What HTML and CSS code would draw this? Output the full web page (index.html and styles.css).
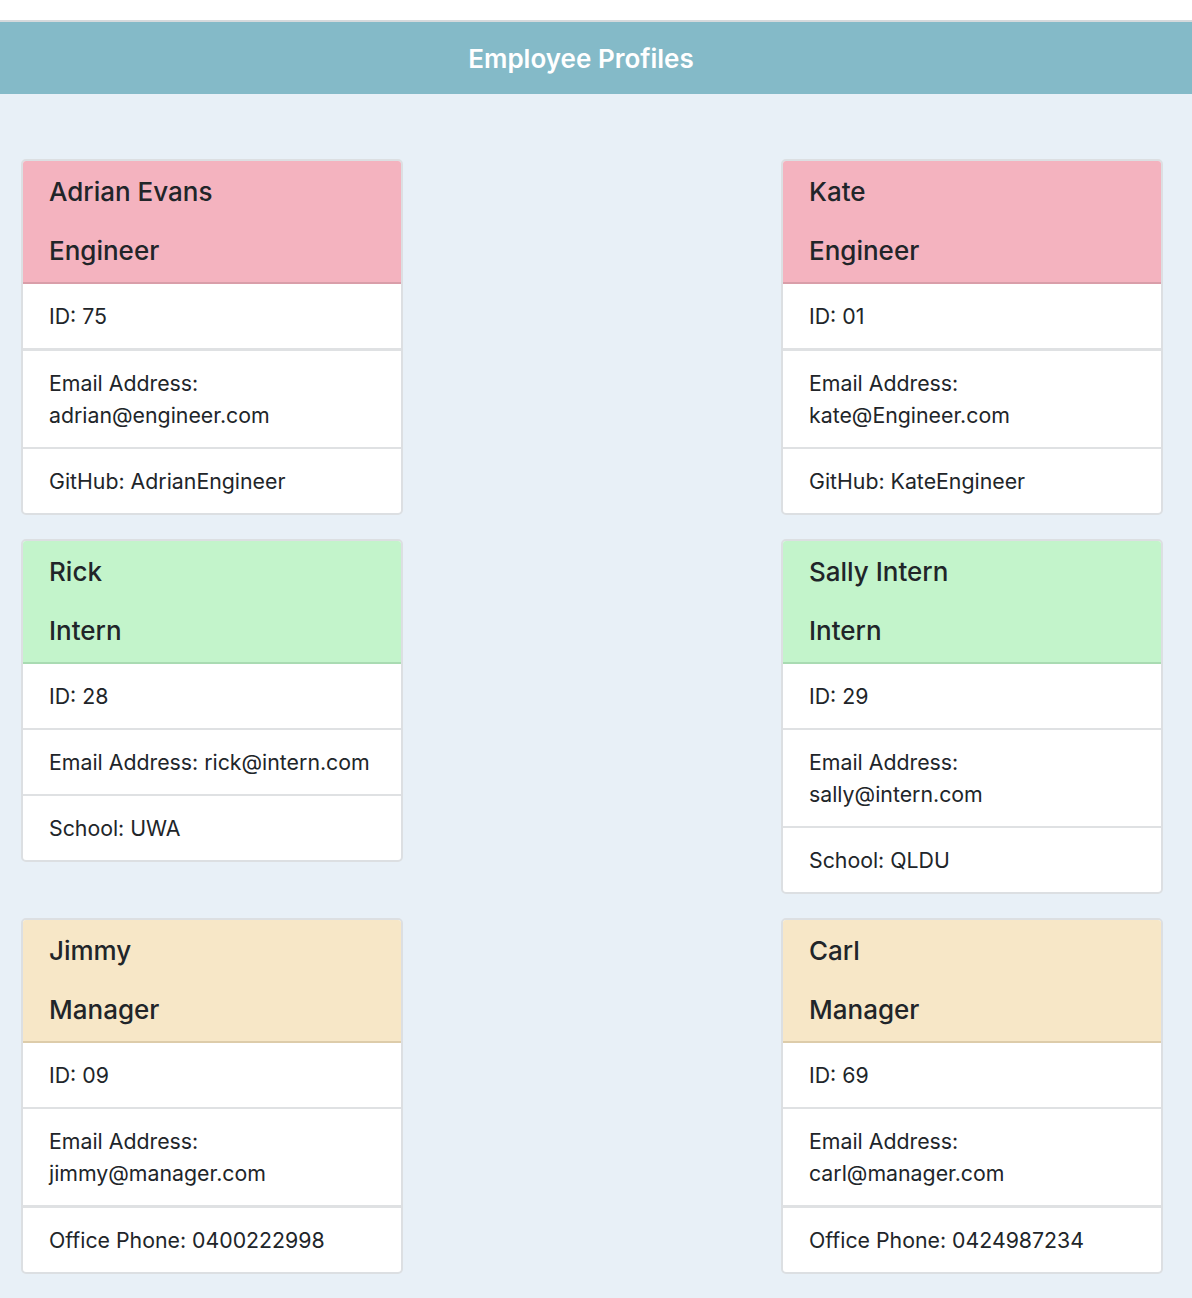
FILE: index.html
```html
<!DOCTYPE html>
<html lang="en">
<head>
<meta charset="utf-8">
<title>Employee Profiles</title>
<link rel="stylesheet" href="styles.css">
</head>
<body>
<div class="topgap"></div>
<header class="banner"><h1 class="banner-title">Employee Profiles</h1></header>
<main class="grid">
  <section class="card">
    <div class="card-header engineer"><h2 class="name">Adrian Evans</h2><h2 class="role">Engineer</h2></div>
    <ul class="list">
      <li class="item thick">ID: 75</li>
      <li class="item">Email Address: adrian@engineer.com</li>
      <li class="item">GitHub: AdrianEngineer</li>
    </ul>
  </section>
  <section class="card">
    <div class="card-header engineer"><h2 class="name">Kate</h2><h2 class="role">Engineer</h2></div>
    <ul class="list">
      <li class="item thick">ID: 01</li>
      <li class="item">Email Address: kate@Engineer.com</li>
      <li class="item">GitHub: KateEngineer</li>
    </ul>
  </section>
  <section class="card">
    <div class="card-header intern"><h2 class="name">Rick</h2><h2 class="role">Intern</h2></div>
    <ul class="list">
      <li class="item">ID: 28</li>
      <li class="item">Email Address: rick@intern.com</li>
      <li class="item">School: UWA</li>
    </ul>
  </section>
  <section class="card">
    <div class="card-header intern"><h2 class="name">Sally Intern</h2><h2 class="role">Intern</h2></div>
    <ul class="list">
      <li class="item">ID: 29</li>
      <li class="item">Email Address: sally@intern.com</li>
      <li class="item">School: QLDU</li>
    </ul>
  </section>
  <section class="card">
    <div class="card-header manager"><h2 class="name">Jimmy</h2><h2 class="role">Manager</h2></div>
    <ul class="list">
      <li class="item">ID: 09</li>
      <li class="item thick">Email Address: jimmy@manager.com</li>
      <li class="item">Office Phone: 0400222998</li>
    </ul>
  </section>
  <section class="card">
    <div class="card-header manager"><h2 class="name">Carl</h2><h2 class="role">Manager</h2></div>
    <ul class="list">
      <li class="item">ID: 69</li>
      <li class="item thick">Email Address: carl@manager.com</li>
      <li class="item">Office Phone: 0424987234</li>
    </ul>
  </section>
</main>
</body>
</html>
```
FILE: styles.css
```css
html, body {
  margin: 0;
  padding: 0;
}
body {
  background: #e8f0f7;
  font-family: Inter, "Noto Sans", "Liberation Sans", sans-serif;
  color: #212529;
  min-height: 1298px;
}
.topgap {
  height: 20px;
  background: #ffffff;
  border-bottom: 2px solid #d5d9dc;
}
.banner {
  background: #84bac8;
  height: 72px;
  display: flex;
  align-items: center;
  justify-content: center;
  padding-right: 30px;
}
.banner-title {
  margin: 0;
  color: #ffffff;
  font-size: 26px;
  font-weight: 600;
}
.grid {
  display: grid;
  grid-template-columns: 382px 382px;
  justify-content: space-between;
  align-items: start;
  row-gap: 24px;
  padding: 65px 29px 24px 21px;
}
.card {
  background: #ffffff;
  border: 2px solid #dcdfe2;
  border-radius: 5px;
  overflow: hidden;
}
.card-header {
  padding: 15px 0 15px 26px;
  border-bottom: 2px solid;
}
.engineer { background: #f4b3bf; border-bottom-color: #d99ea9; }
.intern { background: #c3f4cb; border-bottom-color: #a9dbb2; }
.manager { background: #f7e7c7; border-bottom-color: #ddccaa; }
.name, .role {
  margin: 0;
  font-size: 26px;
  font-weight: 500;
  line-height: 32px;
  color: #212529;
}
.role { margin-top: 27px; }
.list {
  list-style: none;
  margin: 0;
  padding: 0;
}
.item {
  font-size: 21.3px;
  line-height: 32px;
  padding: 16px 26px 16px 26px;
  border-bottom: 2px solid #dfe1e3;
}
.item.thick { border-bottom-width: 3px; }
.item:last-child { border-bottom: 0; }
```
